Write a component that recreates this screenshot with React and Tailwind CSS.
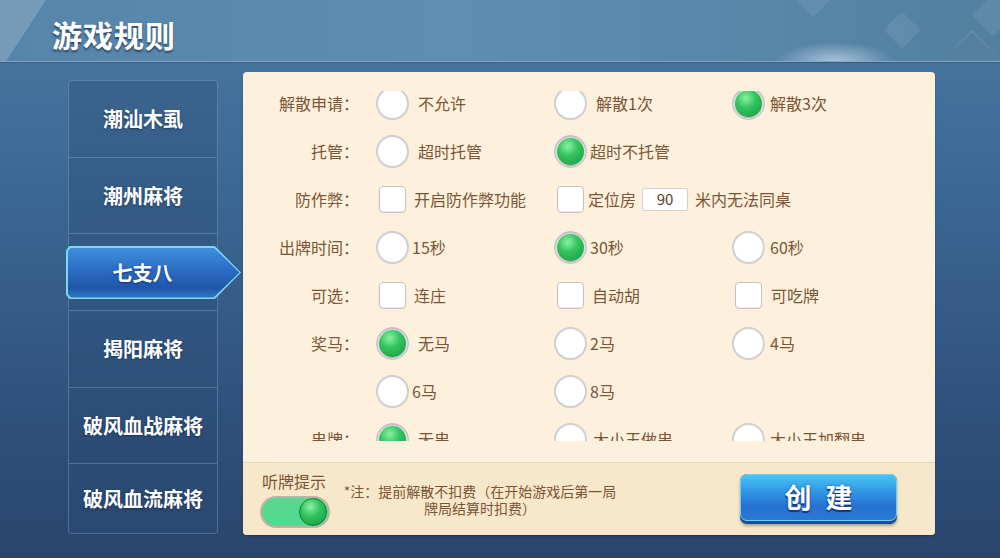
import React from 'react';

const font = { fontFamily: '"Noto Sans CJK SC", "Noto Sans", sans-serif' };

const Radio = ({ on }) =>
  on ? (
    <div className="w-[33px] h-[33px] rounded-full bg-[#e9e9e9] border border-[#bdbdbd] flex items-center justify-center shadow-[inset_0_1px_2px_rgba(0,0,0,0.25)]">
      <div className="w-[27px] h-[27px] rounded-full bg-[radial-gradient(circle_at_40%_30%,#8cf0a4_0%,#33c45e_40%,#129a3e_100%)] shadow-[0_1px_1px_rgba(0,0,0,0.3)]" />
    </div>
  ) : (
    <div className="w-[33px] h-[33px] rounded-full bg-white border-2 border-[#cfcfcf]" />
  );

const Check = () => (
  <div className="w-[33px] h-[33px] flex items-center justify-center">
    <div className="w-[27px] h-[27px] rounded-[4px] bg-white border border-[#c3c3c3] shadow-[inset_0_-1px_1px_rgba(0,0,0,0.08)]" />
  </div>
);

const Opt = ({ type = 'radio', on, text, gap = 'ml-[9px]', w = 'w-[178px]' }) => (
  <div className={`flex items-center ${w}`}>
    {type === 'radio' ? <Radio on={on} /> : <Check />}
    <span className={`${gap} text-[16px] leading-[16px] text-[#7d5535] whitespace-nowrap`}>{text}</span>
  </div>
);

const Row = ({ label, children }) => (
  <div className="flex items-center h-[48px] shrink-0">
    <div className="w-[116px] text-right text-[16px] leading-[16px] text-[#7d5535]">{label}</div>
    <div className="ml-[17px] flex items-center">{children}</div>
  </div>
);

const games = ['潮汕木虱', '潮州麻将', '七支八', '揭阳麻将', '破风血战麻将', '破风血流麻将'];
const heights = ['h-[77px]', 'h-[76px]', 'h-[77px]', 'h-[77px]', 'h-[76px]', 'h-[69px]'];

export default function App() {
  return (
    <div
      style={font}
      className="relative w-[1000px] h-[558px] overflow-hidden bg-[linear-gradient(180deg,#4a79a2_0%,#3b6794_35%,#30507c_75%,#2a456d_100%)]"
    >
      {/* header */}
      <div className="relative h-[62px] overflow-hidden bg-[linear-gradient(90deg,#5785aa_0%,#5f8db2_45%,#5a88ac_70%,#52809f_100%)] border-b border-[#86a9c6] shadow-[0_1px_0_rgba(30,60,90,0.4)]">
        <div className="absolute left-0 top-0 w-[46px] h-[62px] bg-[rgba(255,255,255,0.18)] [clip-path:polygon(0_0,100%_0,12%_100%,0_100%)]" />
        <div className="absolute left-[800px] top-[-14px] w-[26px] h-[26px] rotate-45 bg-[rgba(255,255,255,0.07)]" />
        <div className="absolute left-[889px] top-[17px] w-[26px] h-[26px] rotate-45 bg-[rgba(255,255,255,0.08)]" />
        <div className="absolute left-[978px] top-[0px] w-[30px] h-[30px] rotate-45 bg-[rgba(255,255,255,0.08)]" />
        <div className="absolute left-[940px] top-[30px] w-[64px] h-[32px] [clip-path:polygon(50%_0,100%_100%,0_100%)] bg-[rgba(255,255,255,0.12)]">
          <div className="absolute inset-[1px] top-[2px] [clip-path:polygon(50%_0,100%_100%,0_100%)] bg-[#55819f]" />
        </div>
        <div className="absolute left-[775px] bottom-[-1px] w-[120px] h-[20px] bg-[radial-gradient(ellipse_at_50%_100%,rgba(225,240,255,0.6),transparent_70%)]" />
        <div className="absolute left-[52px] top-[12px] text-[30px] font-bold text-white tracking-[1px] [text-shadow:0_2px_2px_rgba(20,40,70,0.7)]">
          游戏规则
        </div>
      </div>

      {/* body */}
      <div className="flex items-start pl-[68px] pt-[10px]">
        {/* sidebar */}
        <div className="mt-[8px] w-[150px] flex flex-col rounded-[4px] border border-[rgba(150,185,220,0.35)] bg-[rgba(40,75,115,0.35)]">
          {games.map((g, i) => (
            <div
              key={g}
              className={`relative ${heights[i]} flex items-center justify-center ${i < 5 ? 'border-b border-[rgba(150,185,215,0.35)]' : ''}`}
            >
              {i === 2 ? (
                <div className="absolute left-[-3px] top-[12px] w-[175px] h-[53px] bg-[#7fd6f2] [clip-path:polygon(0_8%,2%_0,85%_0,100%_50%,85%_100%,2%_100%,0_92%)]">
                  <div className="absolute inset-[1.5px] flex items-center justify-center pr-[22px] bg-[linear-gradient(180deg,#3f8fdc_0%,#2a6cc4_45%,#1f57a8_80%,#2f79c8_100%)] [clip-path:polygon(0_8%,2%_0,85%_0,100%_50%,85%_100%,2%_100%,0_92%)]">
                    <span className="text-[20px] font-bold text-white [text-shadow:0_1px_2px_rgba(10,30,80,0.7)]">{g}</span>
                  </div>
                </div>
              ) : (
                <span className="text-[20px] font-bold text-white [text-shadow:0_1px_2px_rgba(10,30,60,0.6)]">{g}</span>
              )}
            </div>
          ))}
        </div>

        {/* panel */}
        <div className="ml-[25px] w-[692px] h-[463px] rounded-[4px] bg-[#fdf1de] flex flex-col overflow-hidden shadow-[0_1px_2px_rgba(0,0,0,0.3)]">
          <div className="h-[390px] pt-[19px]">
            <div className="h-[350px] overflow-hidden">
              <div className="-mt-[12px] flex flex-col">
                <Row label="解散申请：">
                  <Opt text="不允许" />
                  <Opt text="解散1次" />
                  <Opt on text="解散3次" gap="ml-[5px]" />
                </Row>
                <Row label="托管：">
                  <Opt text="超时托管" />
                  <Opt on text="超时不托管" gap="ml-[3px]" />
                </Row>
                <Row label="防作弊：">
                  <Opt type="check" text="开启防作弊功能" gap="ml-[5px]" />
                  <div className="flex items-center">
                    <Check />
                    <span className="ml-[1px] text-[16px] leading-[16px] text-[#7d5535]">定位房</span>
                    <div className="ml-[6px] w-[46px] h-[23px] bg-white border border-[#d2d2d2] rounded-[2px] flex items-center justify-center text-[15px] text-[#5a3a22]">
                      90
                    </div>
                    <span className="ml-[7px] text-[16px] leading-[16px] text-[#7d5535]">米内无法同桌</span>
                  </div>
                </Row>
                <Row label="出牌时间：">
                  <Opt text="15秒" gap="ml-[3px]" />
                  <Opt on text="30秒" gap="ml-[3px]" />
                  <Opt text="60秒" gap="ml-[5px]" />
                </Row>
                <Row label="可选：">
                  <Opt type="check" text="连庄" gap="ml-[5px]" />
                  <Opt type="check" text="自动胡" gap="ml-[5px]" />
                  <Opt type="check" text="可吃牌" gap="ml-[6px]" />
                </Row>
                <Row label="奖马：">
                  <Opt on text="无马" />
                  <Opt text="2马" gap="ml-[3px]" />
                  <Opt text="4马" gap="ml-[5px]" />
                </Row>
                <Row label="">
                  <Opt text="6马" gap="ml-[3px]" />
                  <Opt text="8马" gap="ml-[3px]" />
                </Row>
                <Row label="串牌：">
                  <Opt on text="无串" />
                  <Opt text="大小王做串" gap="ml-[6px]" />
                  <Opt text="大小王加翻串" gap="ml-[5px]" />
                </Row>
              </div>
            </div>
          </div>

          {/* footer */}
          <div className="flex-1 bg-[#f7e8cc] border-t border-[#e6d5b6] flex items-center pl-[17px] pr-[38px]">
            <div className="flex flex-col items-center w-[70px]">
              <span className="text-[16px] text-[#7d5535] leading-[20px] -ml-[2px]">听牌提示</span>
              <div className="mt-[5px] w-[70px] h-[32px] rounded-full bg-[#55d98e] border-2 border-[#bdb3a8] flex items-center justify-end pr-[1px]">
                <div className="w-[28px] h-[28px] rounded-full bg-[radial-gradient(circle_at_40%_30%,#8cf0a4_0%,#33c45e_40%,#129a3e_100%)] border border-[#1a7a3a]" />
              </div>
            </div>
            <div className="ml-[12px] w-[276px] flex flex-col items-center text-[14px] leading-[17px] text-[#7d5535] mt-[2px]">
              <span>*注：提前解散不扣费（在开始游戏后第一局</span>
              <span>牌局结算时扣费）</span>
            </div>
            <div className="ml-auto w-[157px] h-[50px] rounded-[7px] bg-[#1c4f9a] pb-[3px] shadow-[0_2px_3px_rgba(0,0,0,0.3)]">
              <div className="h-full rounded-[7px] border border-[#6fd0f7] bg-[linear-gradient(180deg,#48c4f4_0%,#2f93e2_40%,#2672d2_70%,#2b79d6_100%)] flex items-center justify-center">
                <span className="text-[27px] font-bold text-white tracking-[14px] pl-[14px] [text-shadow:0_0_2px_#0d3a80,0_2px_1px_#0d3a80]">
                  创建
                </span>
              </div>
            </div>
          </div>
        </div>
      </div>
    </div>
  );
}
